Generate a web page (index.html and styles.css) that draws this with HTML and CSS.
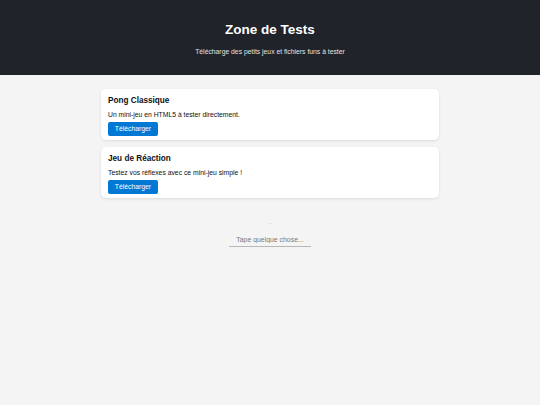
FILE: index.html
```html
<!DOCTYPE html>
<html lang="fr">
<head>
<meta charset="utf-8">
<title>Zone de Tests</title>
<link rel="stylesheet" href="styles.css">
</head>
<body>
<header class="hero">
  <h1 class="hero-title">Zone de Tests</h1>
  <p class="hero-sub">Télécharge des petits jeux et fichiers funs à tester</p>
</header>
<main class="list">
  <section class="card">
    <h2 class="card-title">Pong Classique</h2>
    <p class="card-text">Un mini-jeu en HTML5 à tester directement.</p>
    <a class="btn" href="#">Télécharger</a>
  </section>
  <section class="card">
    <h2 class="card-title">Jeu de Réaction</h2>
    <p class="card-text">Testez vos réflexes avec ce mini-jeu simple !</p>
    <a class="btn" href="#">Télécharger</a>
  </section>
</main>
<div class="playground">
  <div class="dot"></div>
  <input class="field" type="text" placeholder="Tape quelque chose...">
</div>
</body>
</html>
```
FILE: styles.css
```css
html, body {
  margin: 0;
  padding: 0;
}
body {
  background: #f4f4f4;
  font-family: "Liberation Sans", Arial, sans-serif;
  color: #111;
  min-height: 405px;
}
.hero {
  background: #20232a;
  color: #fff;
  height: 75px;
  box-sizing: border-box;
  padding-top: 21px;
  text-align: center;
}
.hero-title {
  margin: 0;
  font-size: 13.5px;
  line-height: 18px;
  font-weight: bold;
}
.hero-sub {
  margin: 9px 0 0;
  font-size: 6.8px;
  line-height: 8px;
  color: #e2e2e2;
}
.list {
  width: 338px;
  margin: 14px auto 0;
  display: flex;
  flex-direction: column;
  gap: 7px;
}
.card {
  background: #fff;
  border-radius: 5px;
  box-shadow: 0 1px 3px rgba(0,0,0,0.1);
  padding: 7px 7px 4px;
  height: 51px;
  box-sizing: border-box;
}
.card-title {
  margin: 0;
  font-size: 8.2px;
  line-height: 10px;
  font-weight: bold;
}
.card-text {
  margin: 4px 0 0;
  font-size: 6.8px;
  line-height: 9px;
}
.btn {
  display: block;
  margin-top: 3px;
  background: #0078d4;
  color: #fff;
  font-size: 6.8px;
  line-height: 14px;
  height: 14px;
  width: 50px;
  text-align: center;
  border-radius: 2px;
  text-decoration: none;
}
.playground {
  display: flex;
  flex-direction: column;
  align-items: center;
  margin-top: 25px;
}
.dot {
  width: 4px;
  height: 1px;
  background: #e6e6e6;
}
.field {
  margin-top: 9px;
  width: 82px;
  height: 14px;
  box-sizing: border-box;
  border: none;
  border-bottom: 1px solid #b8b8b8;
  background: transparent;
  font-family: "Liberation Sans", Arial, sans-serif;
  font-size: 6.9px;
  text-align: center;
  padding: 0;
  outline: none;
}
.field::placeholder {
  color: #7a7a7a;
}
```
